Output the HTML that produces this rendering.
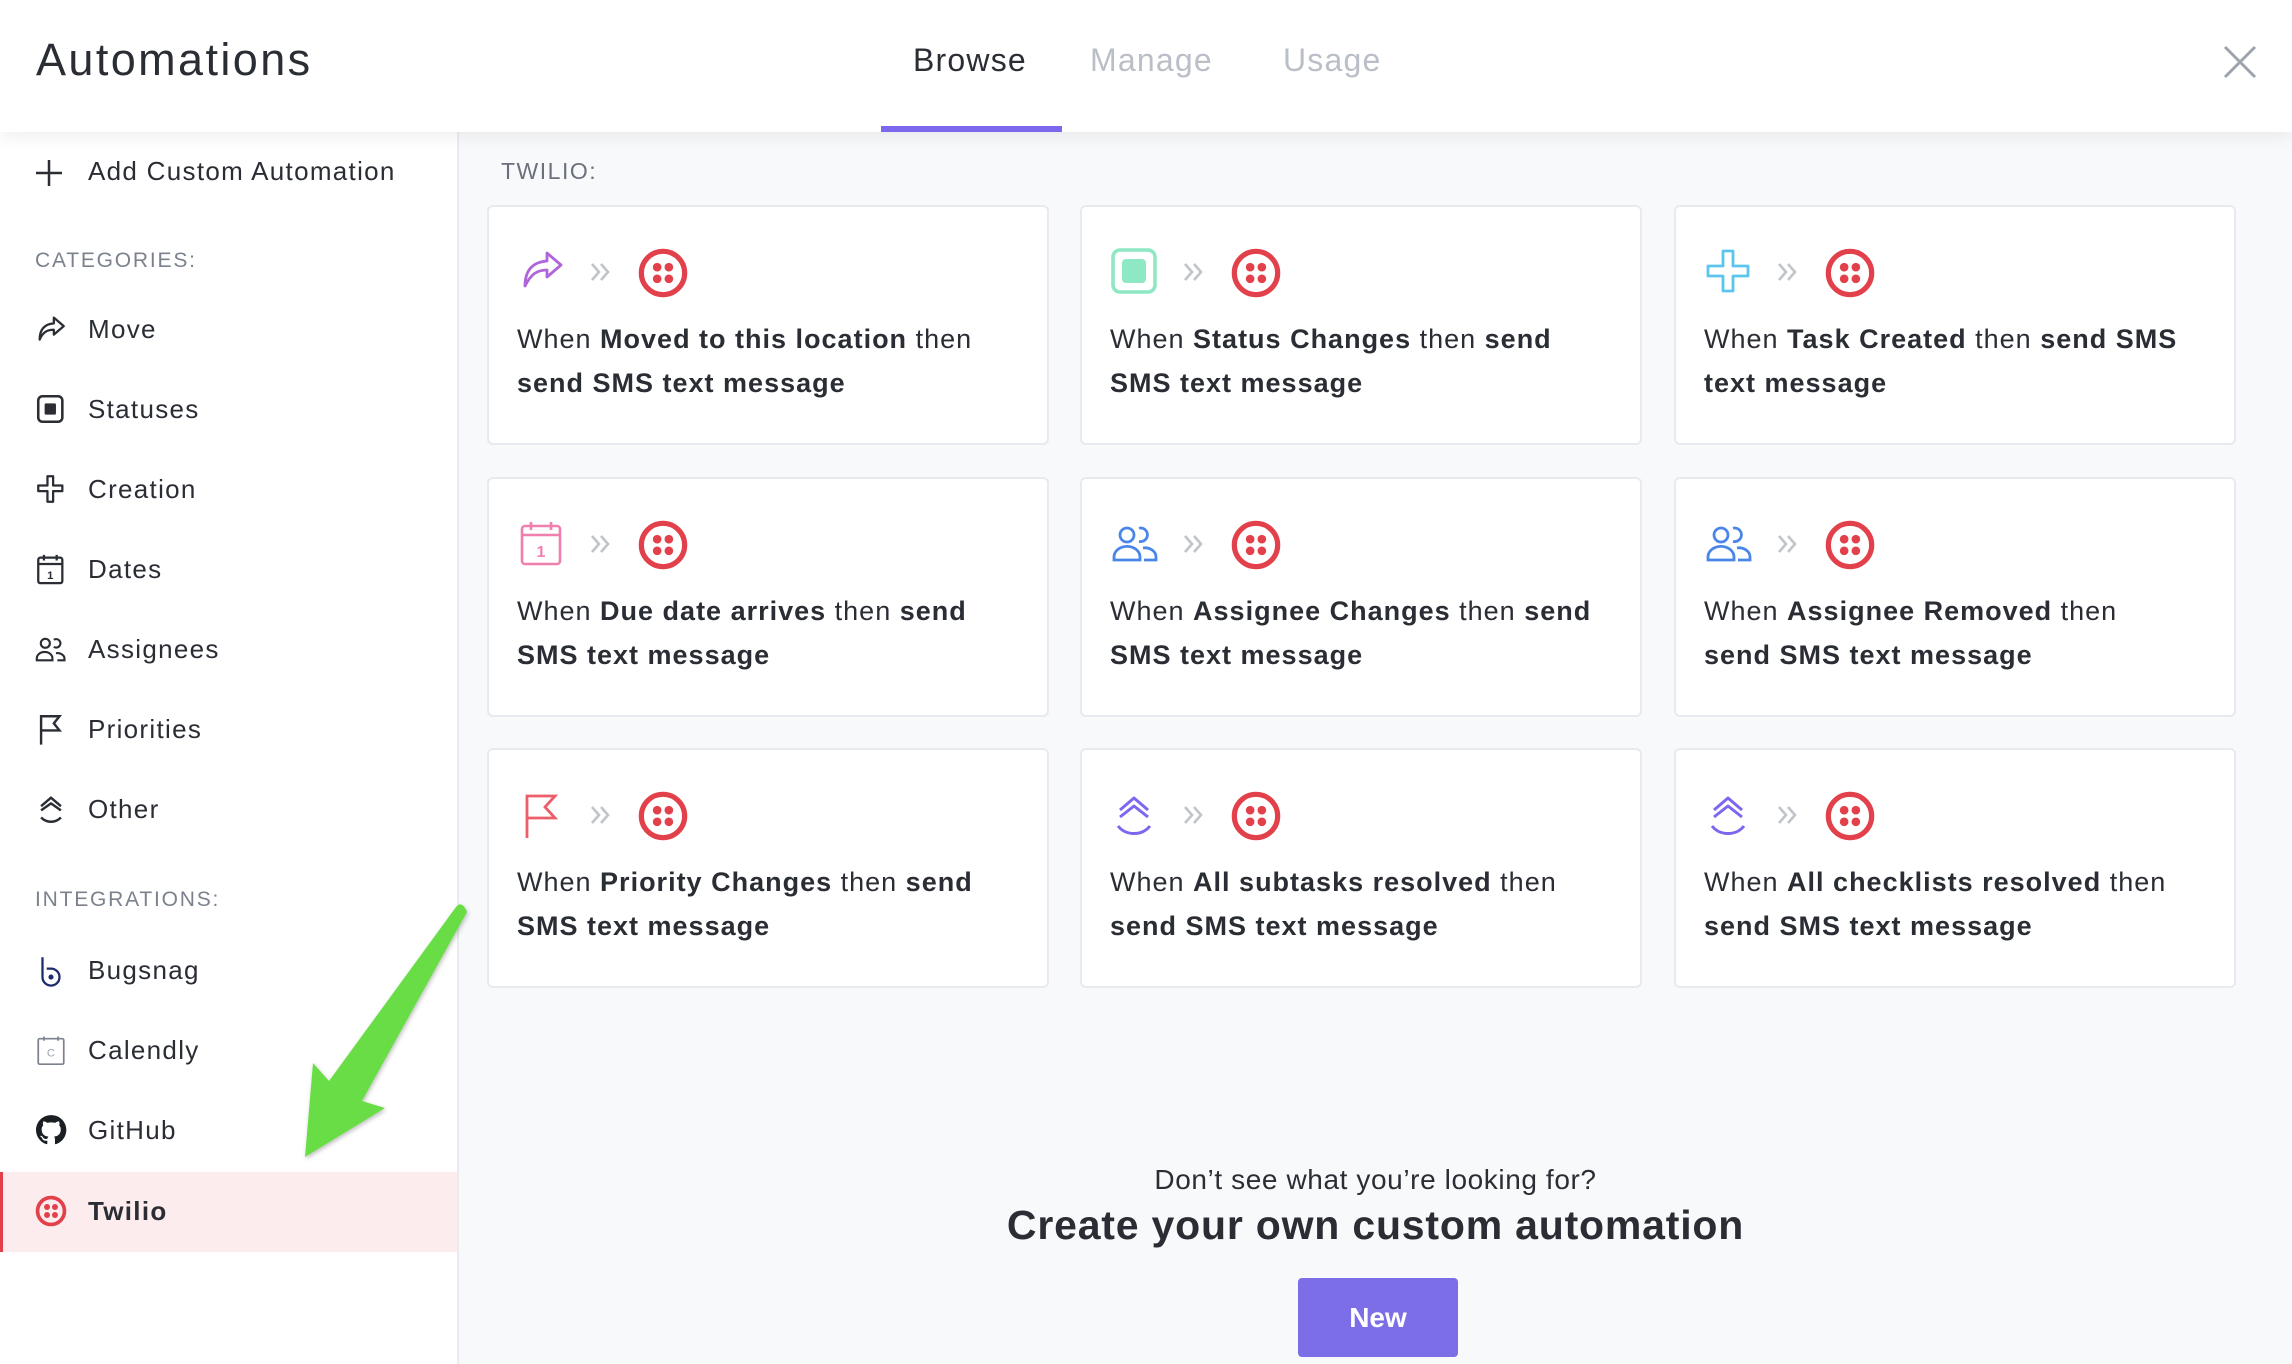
<!DOCTYPE html>
<html><head><meta charset="utf-8">
<style>
*{box-sizing:border-box;margin:0;padding:0}
body{width:2292px;height:1364px;overflow:hidden;font-family:"Liberation Sans",sans-serif;color:#292d34;background:#f8f9fb;position:relative}
.hdr{position:absolute;left:0;top:0;width:2292px;height:132px;background:#fff;box-shadow:0 4px 18px rgba(0,0,0,.07);z-index:3}
.title{position:absolute;left:36px;top:34px;font-size:45px;color:#2a2e34;letter-spacing:2.4px}
.tab{position:absolute;top:42px;font-size:32px;color:#b9bec7;letter-spacing:1.2px}
.ul{position:absolute;left:881px;top:126px;width:181px;height:6px;background:#7b68ee}
.side{position:absolute;left:0;top:132px;width:459px;height:1232px;background:#fff;border-right:2px solid #e9ebf0;z-index:1}
.it{position:absolute;left:0;width:457px;height:80px;font-size:26px;color:#2a2e34}
.it svg{position:absolute;left:34px;top:22px}
.it span{position:absolute;left:88px;top:24px;letter-spacing:1.3px}
.cat{position:absolute;left:35px;font-size:21px;color:#7c828d;letter-spacing:1.8px}
.card{position:absolute;width:562px;height:240px;background:#fff;border:2px solid #e8eaef;border-radius:6px}
.card .ic{position:absolute;left:28px;top:40px}
.card .chev{position:absolute;left:100px;top:53px}
.card .tw{position:absolute;left:148px;top:40px}
.card p{position:absolute;left:28px;top:110px;width:540px;font-size:27px;line-height:44px;color:#2a2e34;letter-spacing:1px;white-space:nowrap}
.card b{font-weight:bold}
</style></head><body>
<div class="hdr">
<div class="title">Automations</div>
<div class="tab" style="left:913px;color:#2a2e34">Browse</div>
<div class="tab" style="left:1090px">Manage</div>
<div class="tab" style="left:1283px">Usage</div>
<div class="ul"></div>
<svg style="position:absolute;left:2223px;top:45px" width="34" height="34" viewBox="0 0 34 34"><path d="M2 2L32 32M32 2L2 32" stroke="#9ea4ad" stroke-width="3"/></svg>
</div>

<div class="side">
<div class="it" style="top:0px"><svg width="30" height="36" viewBox="0 0 30 36"><path d="M15 6v26M2 19h26" stroke="#2a2e34" stroke-width="2.5"/></svg><span style="left:88px">Add Custom Automation</span></div>
<div class="cat" style="top:117px">CATEGORIES:</div>
<div class="it" style="top:158px"><svg width="34" height="34" viewBox="0 0 24 24" fill="none" stroke="#2a2e34" stroke-width="1.6" stroke-linejoin="round"><path d="M14 4l7 6-7 6v-3.5c-5 0-8 2-10 7 0-7 3-11 10-11.5z"/></svg><span>Move</span></div>
<div class="it" style="top:238px"><svg width="34" height="34" viewBox="0 0 24 24"><rect x="3" y="3" width="17" height="18" rx="3" fill="none" stroke="#2a2e34" stroke-width="1.8"/><rect x="7.5" y="8" width="8" height="8" rx="1" fill="#2a2e34"/></svg><span>Statuses</span></div>
<div class="it" style="top:318px"><svg width="34" height="34" viewBox="0 0 24 24" fill="none" stroke="#2a2e34" stroke-width="1.6"><path d="M9.5 3h4v6.5H20v4h-6.5V21h-4v-7.5H3v-4h6.5z" stroke-linejoin="round"/></svg><span>Creation</span></div>
<div class="it" style="top:398px"><svg width="34" height="34" viewBox="0 0 24 24" fill="none" stroke="#2a2e34" stroke-width="1.6"><rect x="3" y="4" width="17" height="18" rx="1.5"/><path d="M3 8.5h17M7 2v4M16 2v4"/><text x="11.5" y="19" font-size="8" font-family="Liberation Sans" font-weight="bold" fill="#2a2e34" stroke="none" text-anchor="middle">1</text></svg><span>Dates</span></div>
<div class="it" style="top:478px"><svg width="34" height="34" viewBox="0 0 24 24" fill="none" stroke="#2a2e34" stroke-width="1.5"><circle cx="8" cy="8" r="3.2"/><path d="M2 20v-1.5a5 4 0 0 1 11 0V20z"/><path d="M14 5.5a3 3 0 1 1 0 5M15.5 15a5 4 0 0 1 6 3.5V20h-5"/></svg><span>Assignees</span></div>
<div class="it" style="top:558px"><svg width="34" height="34" viewBox="0 0 24 24" fill="none" stroke="#2a2e34" stroke-width="1.7"><path d="M5 23V3h13l-4 5 4 5H5"/></svg><span>Priorities</span></div>
<div class="it" style="top:638px"><svg width="34" height="34" viewBox="0 0 24 24" fill="none" stroke="#2a2e34" stroke-width="1.7" stroke-linejoin="round"><path d="M5 10l7-6 7 6M5 13l7-5 7 5M5 18c4 4 10 4 14 0"/></svg><span>Other</span></div>
<div class="cat" style="top:756px">INTEGRATIONS:</div>
<div class="it" style="top:799px"><svg width="34" height="34" viewBox="0 0 24 24" fill="none" stroke="#1b2b6b" stroke-width="1.6"><path d="M6 3v14a6 6 0 1 0 6-6H9"/><circle cx="12" cy="17" r="1" fill="#1b2b6b"/></svg><span>Bugsnag</span></div>
<div class="it" style="top:879px"><svg width="34" height="34" viewBox="0 0 24 24" fill="none" stroke="#7c828d" stroke-width="1.2"><rect x="3" y="4" width="18" height="18" rx="1"/><path d="M7 2.5v3M17 2.5v3"/><text x="12" y="16.5" font-size="8" font-family="Liberation Sans" fill="#9ea4ad" stroke="none" text-anchor="middle">C</text></svg><span>Calendly</span></div>
<div class="it" style="top:959px"><svg width="34" height="34" viewBox="0 0 24 24"><path fill="#1b1f23" d="M12 1.5a10.5 10.5 0 0 0-3.3 20.5c.5.1.7-.2.7-.5v-2c-2.9.6-3.5-1.3-3.5-1.300-.5-1.2-1.2-1.5-1.2-1.5-.9-.6.1-.6.1-.6 1 .1 1.6 1.1 1.6 1.1.9 1.6 2.5 1.1 3.1.9.1-.7.4-1.1.7-1.4-2.3-.3-4.8-1.2-4.8-5.2 0-1.1.4-2.1 1.1-2.8-.1-.3-.5-1.3.1-2.8 0 0 .9-.3 2.9 1.1a10 10 0 0 1 5.3 0c2-1.4 2.9-1.1 2.9-1.1.6 1.5.2 2.5.1 2.8.7.7 1.1 1.7 1.1 2.8 0 4-2.5 4.9-4.8 5.2.4.3.7 1 .7 1.9v2.9c0 .3.2.6.7.5A10.5 10.5 0 0 0 12 1.5z"/></svg><span>GitHub</span></div>
<div class="it" style="top:1040px;background:#fcecee;border-left:3px solid #e2404a"><svg width="34" height="34" viewBox="0 0 24 24" style="left:31px"><circle cx="12" cy="12" r="9.5" fill="none" stroke="#e2404a" stroke-width="2.6"/><circle cx="9.2" cy="9.2" r="2.1" fill="#e2404a"/><circle cx="14.8" cy="9.2" r="2.1" fill="#e2404a"/><circle cx="9.2" cy="14.8" r="2.1" fill="#e2404a"/><circle cx="14.8" cy="14.8" r="2.1" fill="#e2404a"/></svg><span style="left:85px;font-weight:bold">Twilio</span></div>
</div>

<svg style="position:absolute;left:0;top:0;z-index:4" width="480" height="1200" viewBox="0 0 480 1200"><defs><filter id="sh"><feDropShadow dx="1" dy="2" stdDeviation="2" flood-opacity=".25"/></filter></defs><path filter="url(#sh)" fill="#69dd45" d="M456 907Q462 900 467 912L362 1101L385 1108L305 1157L313 1063L329 1081Z"/></svg>

<div style="position:absolute;left:501px;top:158px;font-size:23px;color:#6b717c;letter-spacing:1.5px">TWILIO:</div>

<div id="cards"></div>

<div style="position:absolute;left:459px;width:1833px;top:1164px;text-align:center;font-size:28px;color:#2a2e34;letter-spacing:.6px">Don’t see what you’re looking for?</div>
<div style="position:absolute;left:459px;width:1833px;top:1202px;text-align:center;font-size:41px;font-weight:bold;color:#2a2e34;letter-spacing:.8px">Create your own custom automation</div>
<div style="position:absolute;left:1298px;top:1278px;width:160px;height:79px;background:#7b6ee6;border-radius:4px;color:#fff;font-weight:bold;font-size:28px;text-align:center;line-height:79px">New</div>

<script>
const TW='<svg class="tw" width="52" height="52" viewBox="0 0 24 24"><circle cx="12" cy="12" r="10" fill="none" stroke="#e2404a" stroke-width="2.4"/><circle cx="9.3" cy="9.3" r="2" fill="#e2404a"/><circle cx="14.7" cy="9.3" r="2" fill="#e2404a"/><circle cx="9.3" cy="14.7" r="2" fill="#e2404a"/><circle cx="14.7" cy="14.7" r="2" fill="#e2404a"/></svg>';
const CH='<svg class="chev" width="24" height="24" viewBox="0 0 24 24" fill="none" stroke="#c0c4cb" stroke-width="2.6"><path d="M3 4l7 8-7 8M12 4l7 8-7 8"/></svg>';
const I={
move:'<svg class="ic" width="52" height="48" viewBox="0 0 24 24" fill="none" stroke="#b065d9" stroke-width="1.4" stroke-linejoin="round"><path d="M14 3l7 6-7 6v-3.5c-5 0-8 2-11 8 0-8 4-12 11-12.5z"/></svg>',
status:'<svg class="ic" width="48" height="48" viewBox="0 0 24 24"><rect x="1.5" y="1.5" width="21" height="21" rx="3.5" fill="none" stroke="#8de8c3" stroke-width="1.8"/><rect x="6" y="6" width="12" height="12" rx="2" fill="#8de8c3"/></svg>',
create:'<svg class="ic" width="48" height="48" viewBox="0 0 24 24" fill="none" stroke="#5bc5ec" stroke-width="1.4" stroke-linejoin="round"><path d="M9.5 2h5v7.5H22v5h-7.5V22h-5v-7.5H2v-5h7.5z"/></svg>',
date:'<svg class="ic" width="48" height="48" viewBox="0 0 24 24" fill="none" stroke="#ef7fae" stroke-width="1.3"><rect x="2.5" y="3.5" width="19" height="19" rx="1.5"/><path d="M2.5 8h19M7 1.5v4M17 1.5v4"/><text x="12" y="19" font-size="8" font-family="Liberation Sans" font-weight="bold" fill="#ef7fae" stroke="none" text-anchor="middle">1</text></svg>',
ass:'<svg class="ic" width="50" height="48" viewBox="0 0 24 24" fill="none" stroke="#4a86e8" stroke-width="1.4"><circle cx="8" cy="8" r="3.5"/><path d="M1.5 20.5v-1.5a5.5 4.5 0 0 1 13 0v1.5z"/><path d="M14 4.6a3.4 3.4 0 1 1 0 6.6M16 14.5a5.5 4.5 0 0 1 6.5 4.5v1.5h-6"/></svg>',
flag:'<svg class="ic" width="48" height="52" viewBox="0 0 24 24" fill="none" stroke="#ec5f6a" stroke-width="1.4"><path d="M5 23V2h14l-5 5.5 5 5.5H5"/></svg>',
other:'<svg class="ic" width="48" height="52" viewBox="0 0 24 24" fill="none" stroke="#7b68ee" stroke-width="1.5" stroke-linejoin="round"><path d="M5 9l7-6 7 6M5 12.5l7-5.5 7 5.5M4 17c4 5 12 5 16 0"/></svg>'};
const D=[['move','When <b>Moved to this location</b> then<br><b>send SMS text message</b>'],['status','When <b>Status Changes</b> then <b>send<br>SMS text message</b>'],['create','When <b>Task Created</b> then <b>send SMS<br>text message</b>'],
['date','When <b>Due date arrives</b> then <b>send<br>SMS text message</b>'],['ass','When <b>Assignee Changes</b> then <b>send<br>SMS text message</b>'],['ass','When <b>Assignee Removed</b> then<br><b>send SMS text message</b>'],
['flag','When <b>Priority Changes</b> then <b>send<br>SMS text message</b>'],['other','When <b>All subtasks resolved</b> then<br><b>send SMS text message</b>'],['other','When <b>All checklists resolved</b> then<br><b>send SMS text message</b>']];
const X=[487,1080,1674],Y=[205,477,748];let h='';
D.forEach((d,i)=>{h+=`<div class="card" style="left:${X[i%3]}px;top:${Y[Math.floor(i/3)]}px">${I[d[0]]}${CH}${TW}<p>${d[1]}</p></div>`});
document.getElementById('cards').innerHTML=h;
</script>
</body></html>
